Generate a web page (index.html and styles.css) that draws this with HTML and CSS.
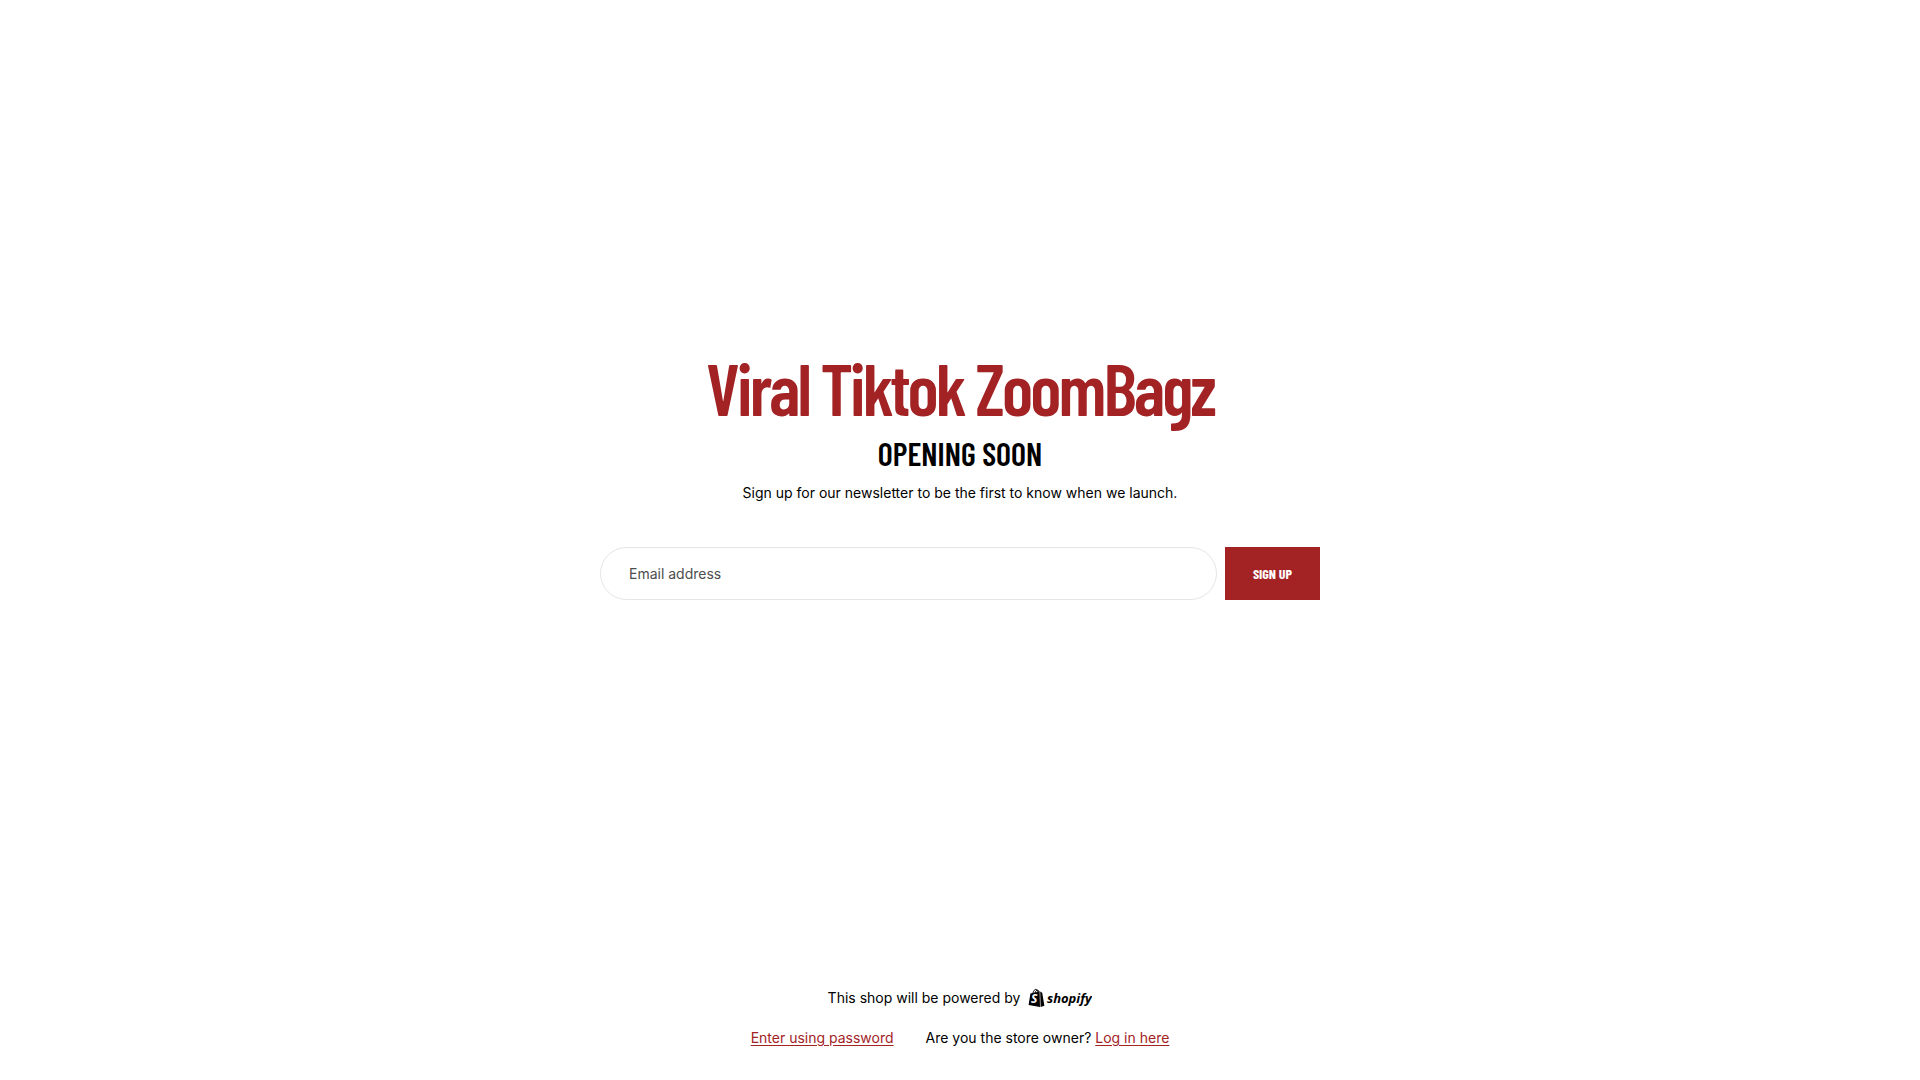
FILE: index.html
```
<!DOCTYPE html>
<html lang="en">
<head>
    <meta charset="UTF-8">
    <meta name="viewport" content="width=device-width, initial-scale=1.0">
    <title>Viral Tiktok ZoomBagz</title>
    <link rel="stylesheet" href="styles.css">
</head>
<body>
    <main class="content">
        <h1 class="shop-name">Viral Tiktok ZoomBagz</h1>
        <h2 class="heading">Opening soon</h2>
        <p class="message">Sign up for our newsletter to be the first to know when we launch.</p>
        <form class="newsletter">
            <input class="email" type="email" id="email" aria-label="Email address" placeholder="Email address" required>
            <button class="signup" type="submit">Sign up</button>
        </form>
    </main>

    <footer class="footer">
        <div class="powered">
            <span>This shop will be powered by</span>
            <a class="shopify" href="#" aria-label="Shopify">
                <svg width="64" height="20" viewBox="0 0 64 20">
                    <path d="M2.4 5.4 L11.6 3.4 L12 19 L.6 17 Z M12.2 3.5 L14.2 4.8 L16.4 17.8 L12.6 19 Z"/>
                    <path class="handle" d="M4.8 5.5 C5.2 3 7 1 8.2 1.4 C9.3 1.8 9.7 3 9.7 4.5 M7 5 C7.6 2.8 8.8 1.9 9.8 2.2 C10.6 2.5 10.9 3 11 4"/>
                    <text class="bag-letter" x="3" y="15">S</text>
                    <text class="wordmark" x="19" y="15">shopify</text>
                </svg>
            </a>
        </div>
        <div class="links">
            <a class="link" href="#">Enter using password</a>
            <p>Are you the store owner? <a class="link" href="#">Log in here</a></p>
        </div>
    </footer>
</body>
</html>
```
FILE: styles.css
```
* {
    box-sizing: border-box;
}
body {
    display: flex;
    flex-direction: column;
    min-height: 100vh;
    margin: 0;
    background-color: #fff;
    color: #000;
    font-family: Inter, sans-serif;
    font-size: 14px;
    line-height: 24px;
}
h1, h2, p {
    margin: 0;
}
.content {
    flex: 1;
    display: flex;
    flex-direction: column;
    align-items: center;
    justify-content: center;
    padding: 0 20px 40px;
    text-align: center;
}
.shop-name, .heading, .signup {
    font-family: "Barlow Condensed", "Roboto", sans-serif;
    font-weight: 600;
}
.shop-name {
    margin-bottom: 6px;
    color: #a32325;
    font-size: 72px;
    line-height: 80px;
    letter-spacing: -0.04em;
}
.heading {
    margin-bottom: 8px;
    font-size: 32px;
    line-height: 40px;
    text-transform: uppercase;
}
.newsletter {
    display: flex;
    gap: 8px;
    width: 100%;
    max-width: 720px;
    margin-top: 42px;
}
.email {
    flex: 1;
    min-width: 0;
    height: 53px;
    padding: 0 28px;
    border: 1px solid #e5e5e5;
    border-radius: 27px;
    color: #000;
    font: inherit;
}
.email::placeholder {
    color: #4d4d4d;
    opacity: 1;
}
.signup {
    padding: 0 28px;
    border: none;
    background-color: #a32325;
    color: #fff;
    font-size: 14px;
    font-weight: bold;
    text-transform: uppercase;
    cursor: pointer;
}
.footer {
    padding: 0 20px 30px;
}
.powered, .links {
    display: flex;
    justify-content: center;
    align-items: center;
}
.powered {
    gap: 8px;
    margin-bottom: 16px;
}
.links {
    flex-wrap: wrap;
    gap: 0 32px;
}
.link {
    color: #a32325;
    text-underline-offset: 2px;
}
.shopify {
    display: flex;
    color: #000;
}
.handle {
    fill: none;
    stroke: #000;
    stroke-width: 1;
}
.bag-letter, .wordmark {
    font-family: "Open Sans", sans-serif;
    font-style: italic;
    font-weight: bold;
}
.bag-letter {
    fill: #fff;
    font-size: 12px;
}
.wordmark {
    font-size: 13px;
}
```
